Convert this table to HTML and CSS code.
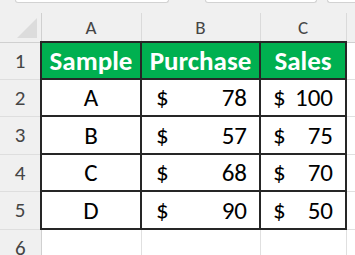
FILE: index.html
```html
<!DOCTYPE html>
<html>
<head>
<meta charset="utf-8">
<link rel="stylesheet" href="styles.css">
</head>
<body>
<div class="top">
  <div class="box b1"></div>
  <div class="box b2"></div>
  <div class="box b3"></div>
</div>
<table class="sheet">
  <colgroup>
    <col class="c-rh"><col class="c-a"><col class="c-b"><col class="c-c"><col class="c-d">
  </colgroup>
  <tr class="colhead">
    <th class="corner"><svg width="20" height="20" viewBox="0 0 20 20"><polygon points="20,0 20,20 0,20" fill="#dcdcdc"/></svg></th>
    <th>A</th><th>B</th><th>C</th><th class="last"></th>
  </tr>
  <tr class="r-h">
    <th class="rh">1</th>
    <td class="hd">Sample</td><td class="hd">Purchase</td><td class="hd">Sales</td><td class="empty"></td>
  </tr>
  <tr class="r-a">
    <th class="rh">2</th>
    <td class="ctr">A</td>
    <td><div class="acc"><span>$</span><span>78</span></div></td>
    <td><div class="acc acc-c"><span>$</span><span>100</span></div></td>
    <td class="empty"></td>
  </tr>
  <tr class="r-b">
    <th class="rh">3</th>
    <td class="ctr">B</td>
    <td><div class="acc"><span>$</span><span>57</span></div></td>
    <td><div class="acc acc-c"><span>$</span><span>75</span></div></td>
    <td class="empty"></td>
  </tr>
  <tr class="r-a">
    <th class="rh">4</th>
    <td class="ctr">C</td>
    <td><div class="acc"><span>$</span><span>68</span></div></td>
    <td><div class="acc acc-c"><span>$</span><span>70</span></div></td>
    <td class="empty"></td>
  </tr>
  <tr class="r-b">
    <th class="rh">5</th>
    <td class="ctr">D</td>
    <td><div class="acc"><span>$</span><span>90</span></div></td>
    <td><div class="acc acc-c"><span>$</span><span>50</span></div></td>
    <td class="empty"></td>
  </tr>
  <tr class="r-a">
    <th class="rh">6</th>
    <td class="blank"></td><td class="blank"></td><td class="blank"></td><td class="empty"></td>
  </tr>
</table>
</body>
</html>
```

FILE: styles.css
```css
html, body {
  margin: 0;
  padding: 0;
  background: #ffffff;
  width: 355px;
  height: 255px;
  overflow: hidden;
  font-family: "Carlito", "Calibri", "Lato", "Open Sans", sans-serif;
}

.top {
  display: flex;
  height: 13px;
  background: #f0f0f0;
  align-items: flex-start;
}

.box {
  height: 2px;
  background: #ffffff;
  border: 1px solid #d2d2d2;
  border-top: none;
  border-radius: 0 0 4px 4px;
}

.b1 { margin-left: 15px; width: 152px; }
.b2 { margin-left: 36px; width: 110px; }
.b3 { margin-left: 10px; flex: 1; border-right: none; border-radius: 0 0 0 4px; }

.sheet {
  border-collapse: collapse;
  table-layout: fixed;
  width: 355px;
}

.c-rh { width: 41px; }
.c-a { width: 100px; }
.c-b { width: 119px; }
.c-c { width: 86px; }
.c-d { width: 9px; }

.colhead th {
  height: 28px;
  padding: 0;
  background: #f0f0f0;
  color: #454545;
  font-weight: normal;
  font-size: 19px;
  text-align: center;
  border-left: 1px solid #dadada;
  border-bottom: 1px solid #d0d0d0;
}

.colhead th.corner {
  border-left: none;
  border-right: 1px solid #d0d0d0;
  text-align: right;
  vertical-align: middle;
}

.corner svg {
  display: block;
  margin: 2px 4px 0 auto;
}

.rh {
  padding: 0;
  background: #f0f0f0;
  color: #454545;
  font-weight: normal;
  font-size: 21px;
  text-align: center;
  border-right: 1px solid #d0d0d0;
  border-bottom: 1px solid #dedede;
}

.r-h { height: 37px; }
.r-a { height: 37px; }
.r-b { height: 38px; }

td {
  padding: 0;
  border: 2px solid #262626;
  font-size: 25px;
  color: #000000;
  vertical-align: middle;
}

td.hd {
  background: #00b050;
  color: #ffffff;
  font-weight: bold;
  font-size: 27px;
  text-align: center;
}

td.ctr { text-align: center; }

td.blank, td.empty {
  border: 1px solid #e0e0e0;
}

td.empty {
  border-left: none;
  border-right: none;
}

.acc {
  display: flex;
  justify-content: space-between;
  padding: 0 12px 0 14px;
}

.acc-c {
  padding-left: 12px;
}
```
